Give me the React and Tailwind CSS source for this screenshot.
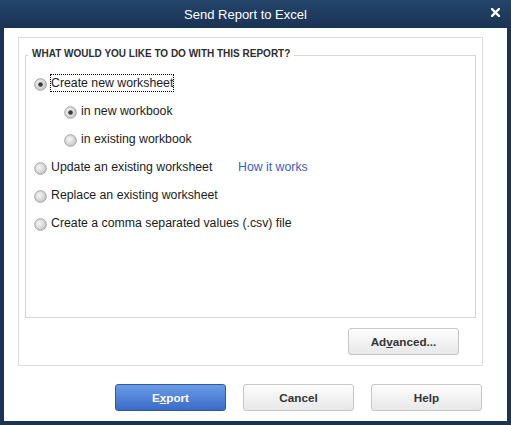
import { useState } from "react";

const font = { fontFamily: '"Liberation Sans", Arial, sans-serif' };

function Radio({ checked }) {
  return (
    <svg width="13" height="13" viewBox="0 0 13 13" className="shrink-0 mt-[2px]">
      <defs>
        <radialGradient id="rb" cx="40%" cy="40%" r="65%">
          <stop offset="0%" stopColor="#f7f7f7" />
          <stop offset="100%" stopColor="#c4c4c4" />
        </radialGradient>
      </defs>
      <circle cx="6.5" cy="6.5" r="5.8" fill="url(#rb)" stroke="#a3a3a3" strokeWidth="1" />
      {checked && <circle cx="6.5" cy="6.5" r="2.3" fill="#3a3a3a" />}
    </svg>
  );
}

function Option({ label, checked, focused, indent, onPick, children }) {
  return (
    <div
      className={`flex items-center h-[28px] gap-[3px] cursor-default ${indent ? "pl-[38px]" : "pl-[8px]"}`}
      onClick={onPick}
    >
      <Radio checked={checked} />
      <span
        className={`leading-[16px] border ${focused ? "border-dotted border-black" : "border-transparent"} ${children ? "w-[185px]" : ""}`}
      >
        {label}
      </span>
      {children}
    </div>
  );
}

function Button({ primary, children }) {
  return (
    <button
      type="button"
      className={
        primary
          ? "w-[111px] h-[27px] rounded-[3px] border border-[#2f58a3] bg-gradient-to-b from-[#6b9ce6] to-[#3b6bc9] text-white font-bold text-[11.7px]"
          : "w-[111px] h-[27px] rounded-[3px] border border-[#c6c6c6] bg-gradient-to-b from-[#fdfdfd] to-[#e8e8e8] text-[#353535] font-bold text-[11.7px]"
      }
    >
      {children}
    </button>
  );
}

export default function App() {
  const [mode, setMode] = useState("new");
  const [book, setBook] = useState("newBook");

  return (
    <div className="w-[511px] h-[425px] bg-[#1c3454] flex flex-col" style={font}>
      {/* title bar */}
      <div className="relative h-[28px] shrink-0 bg-gradient-to-b from-[#24446b] to-[#1b3354] flex items-center justify-center pr-[20px] pt-[1px]">
        <span className="text-white text-[13px]">Send Report to Excel</span>
        <svg className="absolute right-[11px] top-[8px]" width="9" height="9" viewBox="0 0 9 9">
          <path d="M1 1 L8 8 M8 1 L1 8" stroke="#fff" strokeWidth="2.4" strokeLinecap="square" />
        </svg>
      </div>

      <div className="flex-1 mx-[4px] mb-[4px] bg-white flex flex-col pt-[9px] px-[14px]">
        {/* outer group */}
        <div className="border border-[#dcdcdc] flex flex-col mr-[10px] pt-[17px] px-[6px] pb-[10px]">
          <div className="relative h-[263px] border border-[#d6d6d6] pt-[13px] text-[12.3px] text-[#1c1c1c]">
            <span className="absolute left-[2px] -top-[8px] px-[4px] bg-white text-[10px] leading-[12px] font-bold text-[#2e2e2e]">
              WHAT WOULD YOU LIKE TO DO WITH THIS REPORT?
            </span>

            <Option label="Create new worksheet" checked={mode === "new"} focused onPick={() => setMode("new")} />
            <Option label="in new workbook" indent checked={book === "newBook"} onPick={() => setBook("newBook")} />
            <Option label="in existing workbook" indent checked={book === "existingBook"} onPick={() => setBook("existingBook")} />
            <Option label="Update an existing worksheet" checked={mode === "update"} onPick={() => setMode("update")}>
              <a className="text-[#3b60c2] cursor-pointer">How it works</a>
            </Option>
            <Option label="Replace an existing worksheet" checked={mode === "replace"} onPick={() => setMode("replace")} />
            <Option label="Create a comma separated values (.csv) file" checked={mode === "csv"} onPick={() => setMode("csv")} />
          </div>

          <div className="flex justify-end mt-[10px] pr-[17px]">
            <Button>
              Ad<span className="underline">v</span>anced...
            </Button>
          </div>
        </div>

        {/* dialog buttons */}
        <div className="flex justify-end gap-[17px] mt-[18px] pr-[11px]">
          <Button primary>
            E<span className="underline">x</span>port
          </Button>
          <Button>Cancel</Button>
          <Button>Help</Button>
        </div>
      </div>
    </div>
  );
}
